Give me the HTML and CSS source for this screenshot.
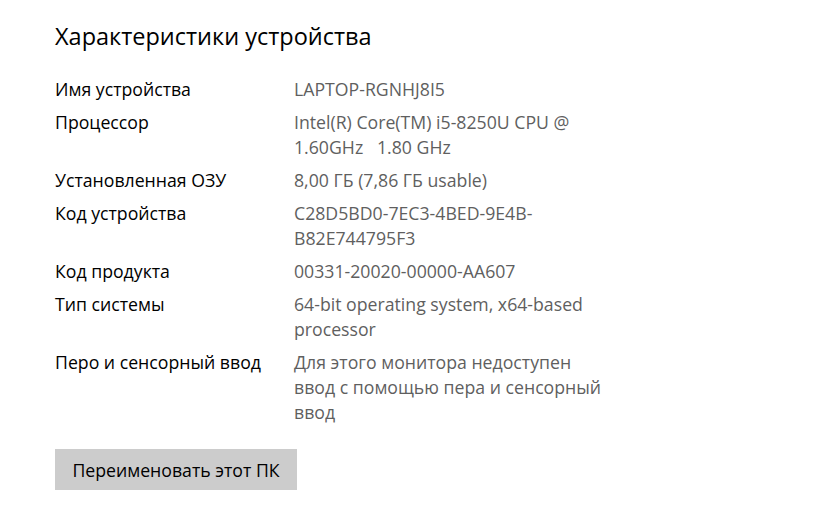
FILE: index.html
```html
<!DOCTYPE html>
<html lang="ru">
<head>
<meta charset="utf-8">
<link rel="stylesheet" href="styles.css">
</head>
<body>
<main class="page">
  <h1 class="title">Характеристики устройства</h1>
  <dl class="specs">
    <div class="row"><dt>Имя устройства</dt><dd>LAPTOP-RGNHJ8I5</dd></div>
    <div class="row"><dt>Процессор</dt><dd>Intel(R) Core(TM) i5-8250U CPU @<br>1.60GHz&nbsp;&nbsp; 1.80 GHz</dd></div>
    <div class="row"><dt>Установленная ОЗУ</dt><dd>8,00 ГБ (7,86 ГБ usable)</dd></div>
    <div class="row"><dt>Код устройства</dt><dd>C28D5BD0-7EC3-4BED-9E4B-<br>B82E744795F3</dd></div>
    <div class="row"><dt>Код продукта</dt><dd>00331-20020-00000-AA607</dd></div>
    <div class="row"><dt>Тип системы</dt><dd>64-bit operating system, x64-based<br>processor</dd></div>
    <div class="row"><dt>Перо и сенсорный ввод</dt><dd>Для этого монитора недоступен<br>ввод с помощью пера и сенсорный<br>ввод</dd></div>
  </dl>
  <button class="rename">Переименовать этот ПК</button>
</main>
</body>
</html>
```
FILE: styles.css
```css
html, body {
  margin: 0;
  padding: 0;
  background: #ffffff;
}
body {
  font-family: "Open Sans", "Noto Sans", sans-serif;
  color: #000;
}
.page {
  padding: 20px 0 0 55px;
}
.title {
  margin: 0;
  font-size: 23.5px;
  font-weight: 400;
  line-height: 32px;
  color: #000;
}
.specs {
  margin: 25px 0 0 0;
  padding: 0;
  display: flex;
  flex-direction: column;
  gap: 8px;
}
.row {
  display: grid;
  grid-template-columns: 239px 1fr;
  font-size: 17.7px;
  line-height: 25px;
}
.row dt {
  margin: 0;
  color: #000;
}
.row dd {
  margin: 0;
  color: #5f5f5f;
}
.rename {
  display: block;
  margin-top: 24px;
  width: 242px;
  height: 41px;
  border: none;
  background: #cccccc;
  font-family: "Open Sans", "Noto Sans", sans-serif;
  font-size: 17.7px;
  color: #000;
  padding: 0;
}
```
